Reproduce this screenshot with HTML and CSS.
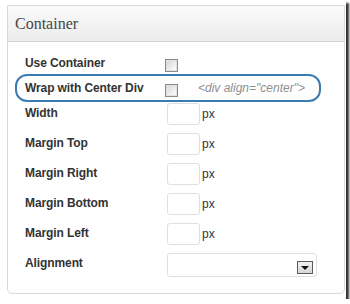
FILE: index.html
```html
<!DOCTYPE html>
<html lang="en">
<head>
    <meta charset="UTF-8">
    <meta name="viewport" content="width=device-width, initial-scale=1.0">
    <title>Container</title>
    <link rel="stylesheet" href="styles.css">
</head>
<body>
    <div class="shot">
        <div class="postbox">
            <h3 class="postbox-title">Container</h3>
            <div class="postbox-body">
                <div class="row row-check row-first">
                    <label class="row-label" for="useContainer">Use Container</label>
                    <input type="checkbox" class="check" id="useContainer">
                </div>
                <div class="row row-check row-wrap">
                    <label class="row-label" for="wrapCenter">Wrap with Center Div</label>
                    <input type="checkbox" class="check" id="wrapCenter">
                    <span class="hint">&lt;div align="center"&gt;</span>
                </div>
                <div class="row row-field">
                    <label class="row-label" for="width">Width</label>
                    <div class="control">
                        <input type="text" class="num" id="width">
                        <span class="unit">px</span>
                    </div>
                </div>
                <div class="row row-field">
                    <label class="row-label" for="marginTop">Margin Top</label>
                    <div class="control">
                        <input type="text" class="num" id="marginTop">
                        <span class="unit">px</span>
                    </div>
                </div>
                <div class="row row-field">
                    <label class="row-label" for="marginRight">Margin Right</label>
                    <div class="control">
                        <input type="text" class="num" id="marginRight">
                        <span class="unit">px</span>
                    </div>
                </div>
                <div class="row row-field">
                    <label class="row-label" for="marginBottom">Margin Bottom</label>
                    <div class="control">
                        <input type="text" class="num" id="marginBottom">
                        <span class="unit">px</span>
                    </div>
                </div>
                <div class="row row-field">
                    <label class="row-label" for="marginLeft">Margin Left</label>
                    <div class="control">
                        <input type="text" class="num" id="marginLeft">
                        <span class="unit">px</span>
                    </div>
                </div>
                <div class="row row-field row-select">
                    <label class="row-label">Alignment</label>
                    <div class="select">
                        <span class="select-btn"></span>
                    </div>
                </div>
            </div>
        </div>
        <div class="callout"></div>
    </div>
</body>
</html>
```

FILE: styles.css
```css
body {
    margin: 0;
    background-color: #fff;
    font-family: "Liberation Sans", Arial, sans-serif;
    color: #333;
}
.shot {
    position: relative;
    width: 346px;
    height: 299px;
    padding: 5px 0 0 7px;
    box-sizing: border-box;
    background-color: #fff;
    box-shadow: 3px 3px 2px rgba(0, 0, 0, 0.8);
}
.postbox {
    width: 338px;
    height: 289px;
    box-sizing: border-box;
    border: 1px solid #d9d9d9;
    border-radius: 0 0 5px 5px;
}
.postbox-title {
    margin: 0;
    height: 35px;
    padding-left: 7px;
    line-height: 35px;
    font-family: "Liberation Serif", Georgia, serif;
    font-size: 16px;
    font-weight: normal;
    color: #464646;
    border-bottom: 1px solid #d4d4d4;
    background: linear-gradient(#fafafa, #ececec);
}
.postbox-body {
    padding: 14px 0 0 17px;
}
.row {
    display: flex;
    align-items: flex-start;
}
.row-first {
    height: 25px;
}
.row-wrap {
    height: 22px;
}
.row-field {
    height: 30px;
}
.row-select {
    height: 24px;
}
.row-label {
    display: block;
    width: 142px;
    flex-shrink: 0;
    font-size: 12px;
    font-weight: bold;
    line-height: 14px;
    letter-spacing: -0.1px;
    color: #333;
}
.row-field .row-label {
    padding-top: 3px;
}
.check {
    appearance: none;
    -webkit-appearance: none;
    width: 13px;
    height: 13px;
    margin: 3px 0 0 -2px;
    box-sizing: border-box;
    border: 1px solid #8a8a8a;
    background: linear-gradient(135deg, #d2d2d2, #f4f4f4 70%, #fff);
    box-shadow: inset 0 0 0 1px #e2e2e2;
}
.hint {
    margin-left: 20px;
    font-size: 12px;
    font-style: italic;
    line-height: 14px;
    color: #8f8f8f;
}
.control {
    display: flex;
    align-items: center;
}
.num {
    width: 33px;
    height: 22px;
    margin: 0;
    padding: 0;
    box-sizing: border-box;
    border: 1px solid #dfdfdf;
    border-radius: 3px;
    background-color: #fff;
}
.unit {
    margin-left: 2px;
    font-size: 12px;
    color: #333;
}
.select {
    width: 150px;
    height: 24px;
    box-sizing: border-box;
    border: 1px solid #dfdfdf;
    border-radius: 3px;
    display: flex;
    justify-content: flex-end;
    align-items: flex-start;
}
.select-btn {
    width: 16px;
    height: 13px;
    margin: 7px 3px 0 0;
    box-sizing: border-box;
    border: 1px solid #5a5a5a;
    background: linear-gradient(#f2f2f2, #d6d6d6);
    display: flex;
    justify-content: center;
    align-items: center;
}
.select-btn::after {
    content: '';
    width: 0;
    height: 0;
    border-left: 4px solid transparent;
    border-right: 4px solid transparent;
    border-top: 4px solid #111;
}
.callout {
    position: absolute;
    left: 15px;
    top: 74px;
    width: 306px;
    height: 28px;
    box-sizing: border-box;
    border: 2px solid #3b7bb0;
    border-radius: 12px;
}
```
